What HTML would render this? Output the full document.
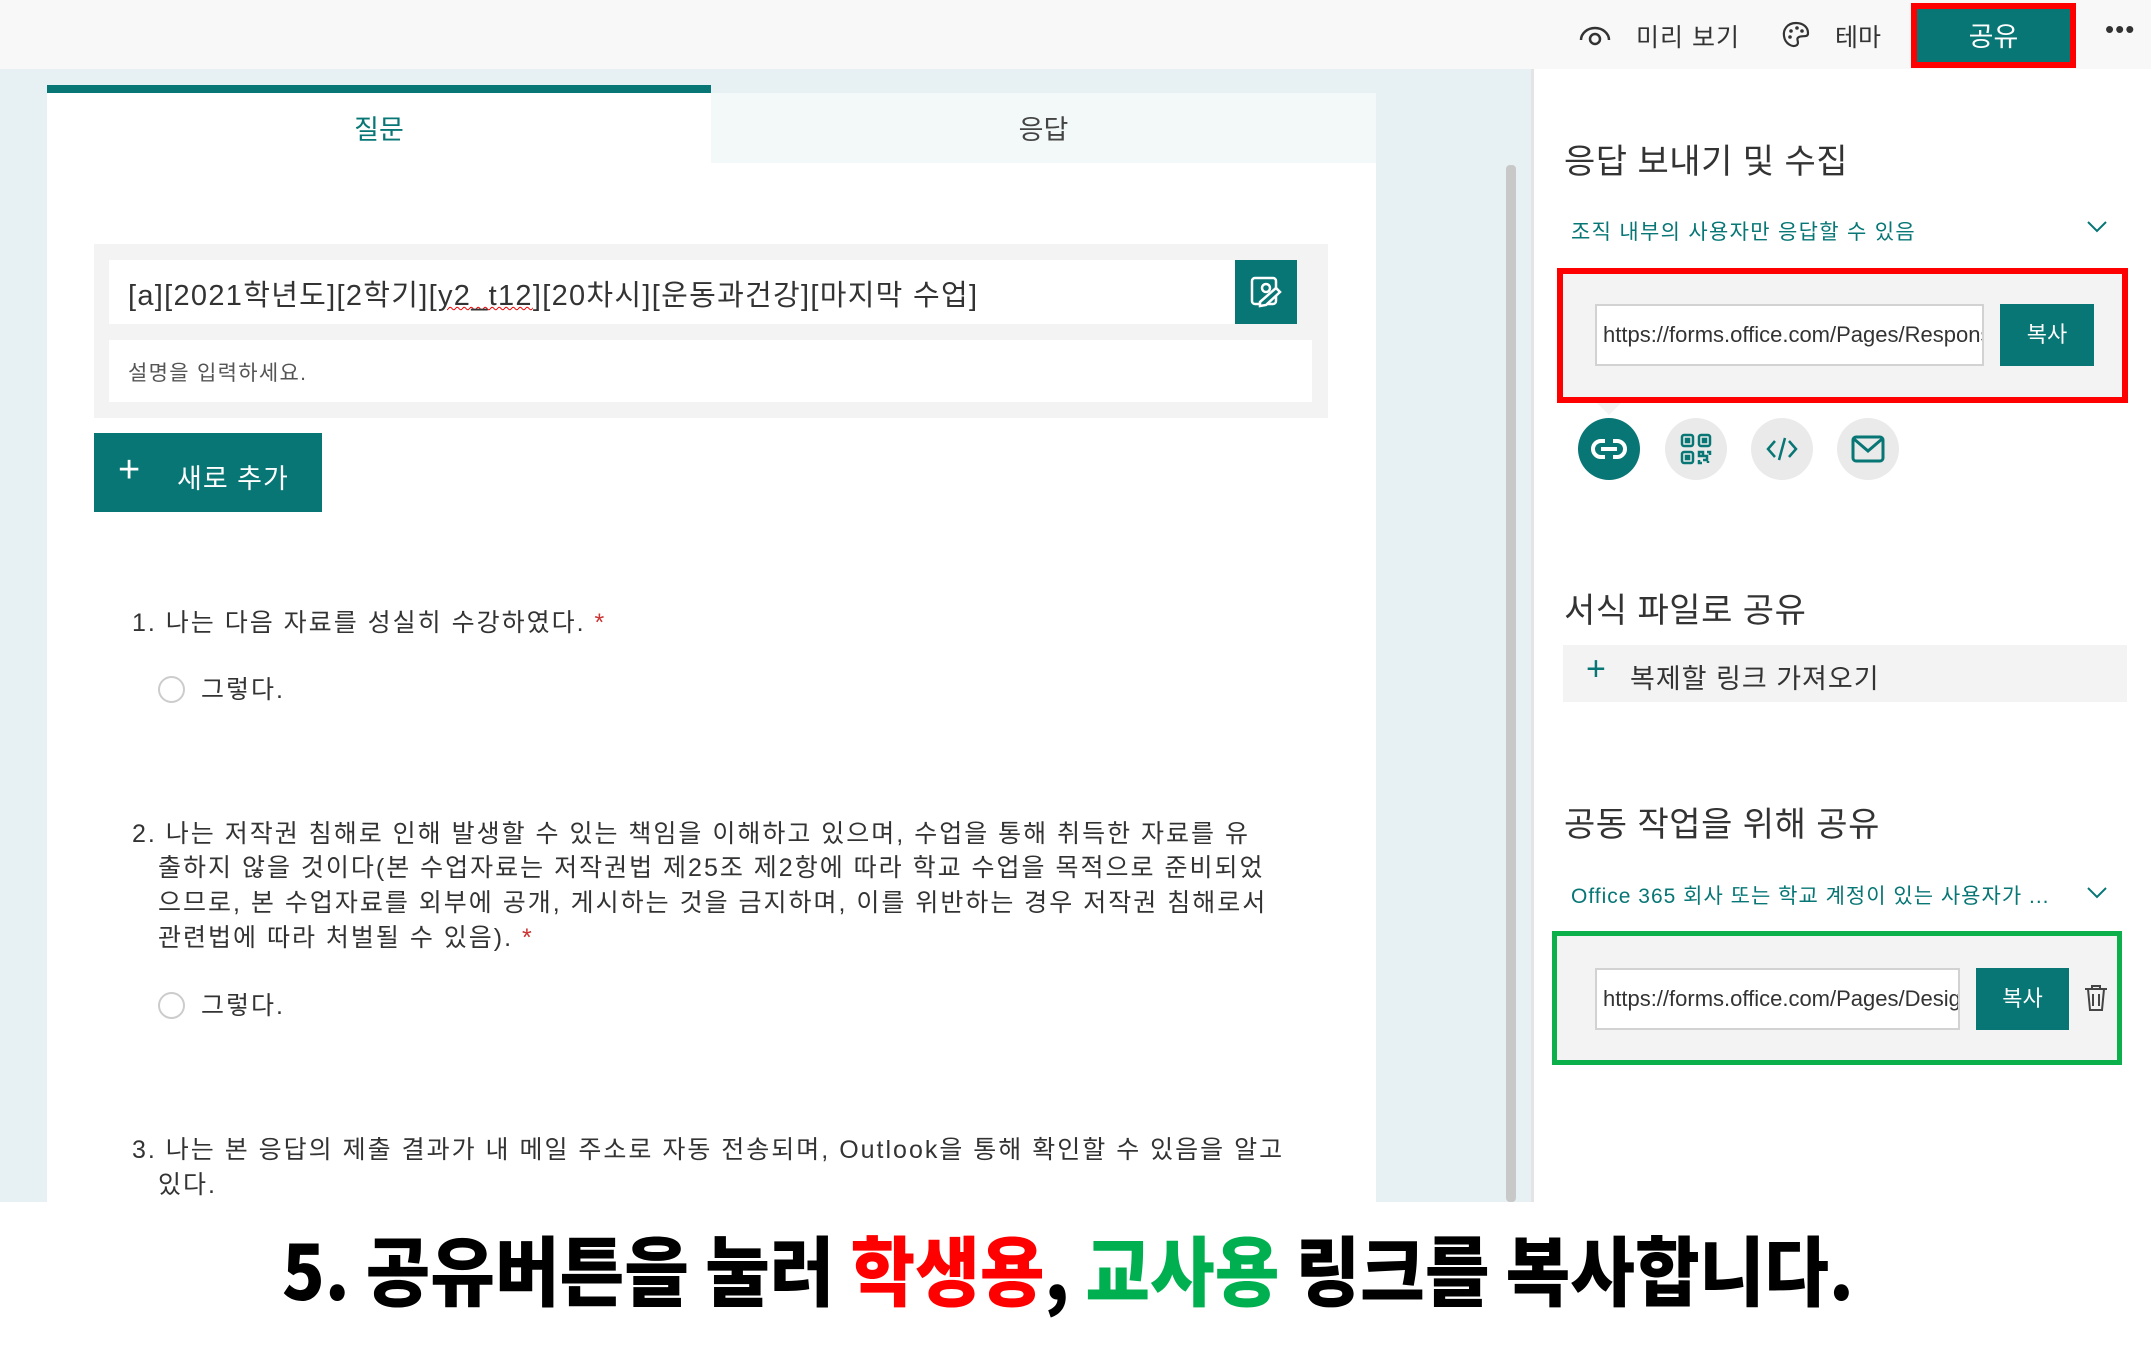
<!DOCTYPE html>
<html><head><meta charset="utf-8">
<style>
*{margin:0;padding:0;box-sizing:border-box}
body{width:2151px;height:1346px;position:relative;overflow:hidden;background:#fff;font-family:"Liberation Sans","Noto Sans CJK KR",sans-serif;color:#333}
.a{position:absolute}
.top{left:0;top:0;width:2151px;height:69px;background:#f8f8f8}
.left{left:0;top:69px;width:1531px;height:1133px;background:#e7f0f2}
.card{left:47px;top:93px;width:1329px;height:1109px;background:#fff}
.tab2{left:711px;top:93px;width:665px;height:70px;background:#f3f8f8}
.tabbar{left:47px;top:85px;width:664px;height:8px;background:#077675}
.teal{background:#077675;color:#fff}
.q{font-size:25px;color:#333;line-height:34.5px;letter-spacing:2px;white-space:nowrap}
.right{left:1531px;top:69px;width:620px;height:1133px;background:#fff;border-left:3px solid #e4e4e4}
.h{font-size:34px;color:#333;letter-spacing:0.5px}
.link{font-size:21px;color:#077675;letter-spacing:1.3px}
.inp{background:#fff;border:2px solid #d2d2d2;font-size:22px;color:#333;padding-left:6px;line-height:58px;overflow:hidden;white-space:nowrap}
.circ{width:62px;height:62px;border-radius:50%;background:#eaeaea}
</style></head><body>
<div class="a top"></div>
<svg class="a" style="left:1578px;top:22px" width="34" height="26" viewBox="0 0 34 26"><path d="M3 18 A14 12 0 0 1 31 18" fill="none" stroke="#333" stroke-width="2.5"/><circle cx="17" cy="17" r="5" fill="none" stroke="#333" stroke-width="2.5"/></svg>
<div class="a" style="left:1636px;top:18px;font-size:25px;color:#333;letter-spacing:1px">미리 보기</div>
<svg class="a" style="left:1781px;top:20px" width="30" height="30" viewBox="0 0 30 30"><path d="M15 3 C6 3 2 10 3 16 C4 24 12 28 16 25 C19 22 14 19 18 17 C22 15 27 18 27 13 C27 7 22 3 15 3Z" fill="none" stroke="#333" stroke-width="2.2"/><circle cx="10" cy="11" r="1.8" fill="#333"/><circle cx="16" cy="8" r="1.8" fill="#333"/><circle cx="21" cy="11" r="1.8" fill="#333"/><circle cx="9" cy="17" r="1.8" fill="#333"/></svg>
<div class="a" style="left:1835px;top:18px;font-size:25px;color:#333">테마</div>
<div class="a" style="left:1911px;top:3px;width:165px;height:65px;border:6px solid #f00;background:#077675"></div>
<div class="a" style="left:1911px;top:15px;width:165px;text-align:center;font-size:27px;color:#fff">공유</div>
<div class="a" style="left:2105px;top:14px;font-size:26px;color:#333;letter-spacing:1px">•••</div>

<div class="a left"></div>
<div class="a card"></div>
<div class="a tab2"></div>
<div class="a tabbar"></div>
<div class="a" style="left:47px;top:108px;width:664px;text-align:center;font-size:27px;color:#077675">질문</div>
<div class="a" style="left:711px;top:108px;width:665px;text-align:center;font-size:27px;color:#444">응답</div>
<div class="a" style="left:1506px;top:165px;width:8px;height:1037px;background:#c8c8c8;border-radius:4px"></div>

<div class="a" style="left:94px;top:244px;width:1234px;height:174px;background:#f3f3f3"></div>
<div class="a" style="left:109px;top:260px;width:1126px;height:64px;background:#fff"></div>
<div class="a" style="left:128px;top:272px;font-size:29px;color:#333;white-space:nowrap;letter-spacing:1.3px">[a][2021학년도][2학기][<span style="text-decoration:underline wavy #e00;text-decoration-thickness:1px">y2_t12</span>][20차시][운동과건강][마지막 수업]</div>
<div class="a teal" style="left:1235px;top:260px;width:62px;height:64px"></div>
<svg class="a" style="left:1248px;top:274px" width="36" height="36" viewBox="0 0 36 36"><rect x="4" y="4" width="24" height="26" rx="3" fill="none" stroke="#fff" stroke-width="2.5"/><circle cx="18" cy="14" r="4" fill="none" stroke="#fff" stroke-width="2.5"/><path d="M12 28 L28 14 L32 18 L18 31 L12 32Z" fill="#077675" stroke="#fff" stroke-width="2.5"/></svg>
<div class="a" style="left:109px;top:340px;width:1203px;height:62px;background:#fff"></div>
<div class="a" style="left:128px;top:357px;font-size:21px;color:#555;letter-spacing:1.3px">설명을 입력하세요.</div>
<div class="a teal" style="left:94px;top:433px;width:228px;height:79px"></div>
<div class="a" style="left:118px;top:449px;font-size:38px;color:#fff;font-weight:300">+</div>
<div class="a" style="left:177px;top:457px;font-size:27px;color:#fff;letter-spacing:1px">새로 추가</div>

<div class="a q" style="left:132px;top:606px">1. 나는 다음 자료를 성실히 수강하였다. <span style="color:#c33">*</span></div>
<div class="a" style="left:158px;top:676px;width:27px;height:27px;border-radius:50%;border:2px solid #ccc"></div>
<div class="a q" style="left:201px;top:673px">그렇다.</div>
<div class="a q" style="left:132px;top:817px">2. 나는 저작권 침해로 인해 발생할 수 있는 책임을 이해하고 있으며, 수업을 통해 취득한 자료를 유</div>
<div class="a q" style="left:158px;top:851px">출하지 않을 것이다(본 수업자료는 저작권법 제25조 제2항에 따라 학교 수업을 목적으로 준비되었</div>
<div class="a q" style="left:158px;top:886px">으므로, 본 수업자료를 외부에 공개, 게시하는 것을 금지하며, 이를 위반하는 경우 저작권 침해로서</div>
<div class="a q" style="left:158px;top:921px">관련법에 따라 처벌될 수 있음). <span style="color:#c33">*</span></div>
<div class="a" style="left:158px;top:992px;width:27px;height:27px;border-radius:50%;border:2px solid #ccc"></div>
<div class="a q" style="left:201px;top:989px">그렇다.</div>
<div class="a q" style="left:132px;top:1133px">3. 나는 본 응답의 제출 결과가 내 메일 주소로 자동 전송되며, Outlook을 통해 확인할 수 있음을 알고</div>
<div class="a q" style="left:158px;top:1168px">있다.</div>

<div class="a right"></div>
<div class="a" style="left:1508px;top:165px;width:8px;height:1037px;background:#c8c8c8;border-radius:4px"></div>
<div class="a h" style="left:1564px;top:134px">응답 보내기 및 수집</div>
<div class="a link" style="left:1571px;top:216px">조직 내부의 사용자만 응답할 수 있음</div>
<svg class="a" style="left:2086px;top:220px" width="22" height="14" viewBox="0 0 22 14"><path d="M2 2 L11 11 L20 2" fill="none" stroke="#077675" stroke-width="2"/></svg>
<div class="a" style="left:1557px;top:268px;width:571px;height:135px;border:6px solid #f00;background:#f3f3f3"></div>
<div class="a inp" style="left:1595px;top:304px;width:389px;height:62px">https://forms.office.com/Pages/ResponsePage</div>
<div class="a teal" style="left:2000px;top:304px;width:94px;height:62px;text-align:center;line-height:62px;font-size:22px">복사</div>
<div class="a" style="left:1597px;top:403px;width:0;height:0;border-left:12px solid transparent;border-right:12px solid transparent;border-top:12px solid #f3f3f3"></div>
<div class="a circ" style="left:1578px;top:418px;background:#077675"></div>
<svg class="a" style="left:1590px;top:432px" width="38" height="34" viewBox="0 0 38 34"><rect x="3" y="9" width="32" height="16" rx="8" fill="none" stroke="#fff" stroke-width="4"/><line x1="11" y1="17" x2="27" y2="17" stroke="#fff" stroke-width="4"/><rect x="15" y="7" width="8" height="5" fill="#077675"/><rect x="15" y="22" width="8" height="5" fill="#077675"/></svg>
<div class="a circ" style="left:1665px;top:418px"></div>
<svg class="a" style="left:1680px;top:433px" width="32" height="32" viewBox="0 0 32 32" fill="none" stroke="#077675" stroke-width="2.5"><rect x="2" y="2" width="11" height="11" rx="2"/><rect x="19" y="2" width="11" height="11" rx="2"/><rect x="2" y="19" width="11" height="11" rx="2"/><rect x="6" y="6" width="3" height="3" fill="#077675"/><rect x="23" y="6" width="3" height="3" fill="#077675"/><rect x="6" y="23" width="3" height="3" fill="#077675"/><path d="M19 19h4v4h-4zM27 19h3v3M23 23h4v4h-4M19 27v3h3M28 28v2"/></svg>
<div class="a circ" style="left:1751px;top:418px"></div>
<svg class="a" style="left:1765px;top:433px" width="34" height="32" viewBox="0 0 34 32" fill="none" stroke="#077675" stroke-width="2.5"><path d="M10 8 L3 16 L10 24M24 8 L31 16 L24 24M20 5 L14 27"/></svg>
<div class="a circ" style="left:1837px;top:418px"></div>
<svg class="a" style="left:1850px;top:434px" width="36" height="30" viewBox="0 0 36 30" fill="none" stroke="#077675" stroke-width="3"><rect x="3" y="3" width="30" height="24" rx="3"/><path d="M4 5 L18 17 L32 5"/></svg>

<div class="a h" style="left:1564px;top:583px">서식 파일로 공유</div>
<div class="a" style="left:1563px;top:645px;width:564px;height:57px;background:#f3f3f3"></div>
<div class="a" style="left:1586px;top:650px;font-size:34px;color:#077675;font-weight:300">+</div>
<div class="a" style="left:1630px;top:657px;font-size:27px;color:#333;letter-spacing:1px">복제할 링크 가져오기</div>

<div class="a h" style="left:1564px;top:797px">공동 작업을 위해 공유</div>
<div class="a link" style="left:1571px;top:880px;letter-spacing:1px">Office 365 회사 또는 학교 계정이 있는 사용자가 ...</div>
<svg class="a" style="left:2086px;top:886px" width="22" height="14" viewBox="0 0 22 14"><path d="M2 2 L11 11 L20 2" fill="none" stroke="#077675" stroke-width="2"/></svg>
<div class="a" style="left:1552px;top:931px;width:570px;height:134px;border:5px solid #0bb04b;background:#f3f3f3"></div>
<div class="a inp" style="left:1595px;top:968px;width:365px;height:62px">https://forms.office.com/Pages/DesignPage</div>
<div class="a teal" style="left:1976px;top:968px;width:93px;height:62px;text-align:center;line-height:62px;font-size:22px">복사</div>
<svg class="a" style="left:2083px;top:983px" width="26" height="30" viewBox="0 0 26 30" fill="none" stroke="#444" stroke-width="2"><path d="M2 6h22M9 6V3h8v3M5 6l2 21h12l2-21M10 11v12M16 11v12"/></svg>

<div class="a" style="left:0;top:1202px;width:2151px;height:144px;background:#fff"></div>
<div class="a" style="left:282px;top:1212px;font-size:76px;font-weight:900;color:#000;white-space:nowrap;font-family:'Noto Sans CJK KR',sans-serif;transform:scaleX(0.925);transform-origin:0 0">5. 공유버튼을 눌러 <span style="color:#f00">학생용</span>, <span style="color:#00b050">교사용</span> 링크를 복사합니다.</div>
</body></html>
